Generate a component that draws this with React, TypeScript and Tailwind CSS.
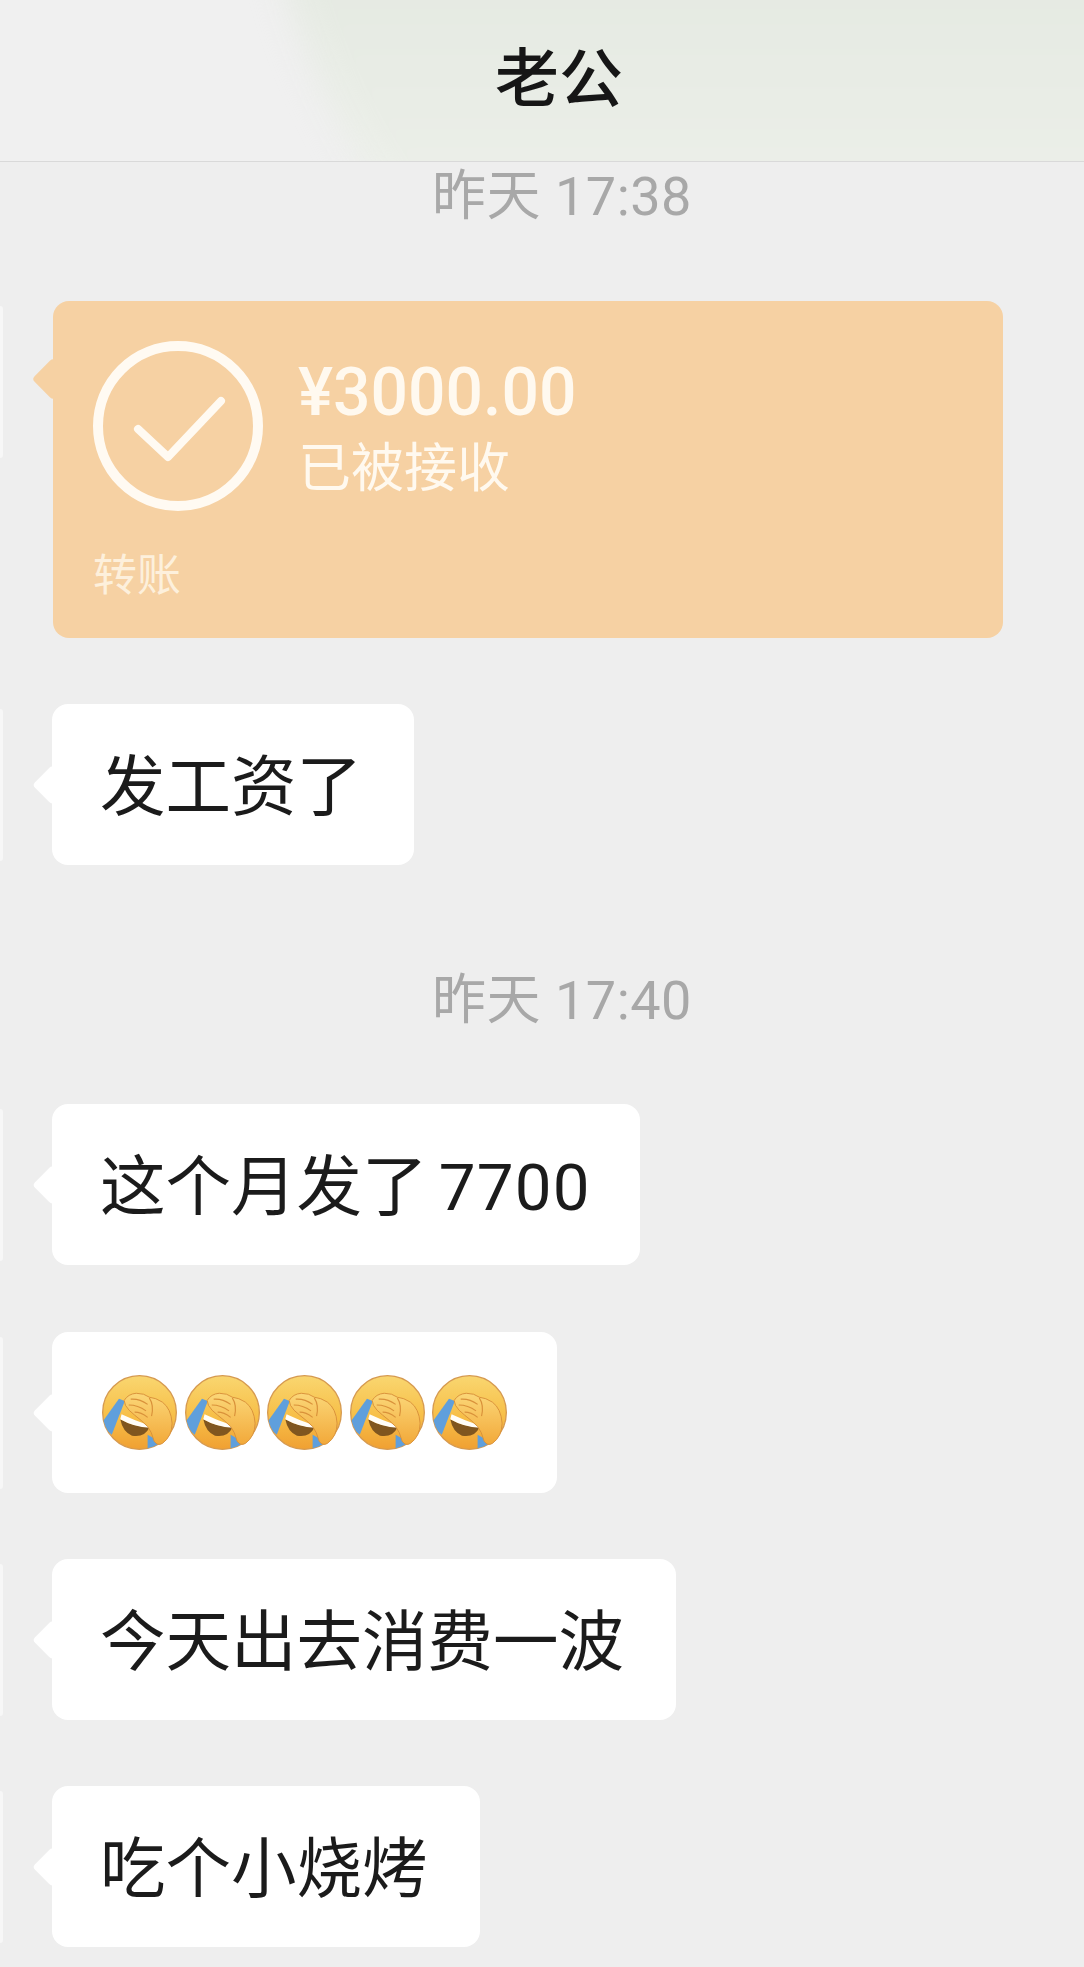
const cjk = "font-['Roboto','Noto_Sans_CJK_SC',sans-serif]";

function FacepalmEmoji() {
  return (
    <svg width="75" height="75" viewBox="20 12 230 230" className="shrink-0 blur-[0.6px]">
      <defs>
        <linearGradient id="face" x1="0" y1="0" x2="0" y2="1">
          <stop offset="0" stopColor="#f9d670" />
          <stop offset="0.55" stopColor="#f7bf48" />
          <stop offset="1" stopColor="#f0a032" />
        </linearGradient>
        <linearGradient id="hand" x1="0" y1="0" x2="0" y2="1">
          <stop offset="0" stopColor="#fbd778" />
          <stop offset="1" stopColor="#f2a93a" />
        </linearGradient>
        <clipPath id="faceClip">
          <circle cx="135" cy="127" r="113" />
        </clipPath>
      </defs>
      <circle cx="135" cy="127" r="113" fill="url(#face)" stroke="#d69a50" strokeWidth="4" />
      <g clipPath="url(#faceClip)">
        <path d="M72 85 L90 92 L50 195 L15 165 Z" fill="#5f9fdc" />
        <path d="M160 195 L195 215 L185 245 L160 245 Z" fill="#5f9fdc" />
        <path d="M76 148 Q118 172 166 172 Q150 205 112 198 Q84 188 76 148 Z" fill="#80561f" />
        <path d="M80 132 Q118 150 158 164 L166 174 Q118 172 76 148 Z" fill="#fffdf8" />
      </g>
      <path
        d="M88 90 Q100 70 125 68 Q150 68 165 80 Q185 82 205 95 Q232 115 235 160 Q235 200 205 222 Q190 230 180 215 Q172 185 160 170 Q140 150 120 135 Q100 120 92 105 Z"
        fill="url(#hand)"
        stroke="#d9913a"
        strokeWidth="3"
      />
      <path
        d="M108 86 Q135 84 160 102 M102 104 Q130 104 155 122 M120 126 Q140 126 160 142 M165 82 Q180 105 172 138"
        stroke="#d9913a"
        strokeWidth="3.5"
        fill="none"
      />
    </svg>
  );
}

function Tail({ className }: { className: string }) {
  return <div className={`absolute left-0 -translate-x-1/2 -translate-y-1/2 rotate-45 rounded-[4px] ${className}`} />;
}

function Row({ children, className }: { children: React.ReactNode; className?: string }) {
  return (
    <div className={`flex items-start ${className ?? ''}`}>
      <div className="w-[3px] h-[152px] mt-[5px] rounded-r-[8px] bg-[#f7f7f7]" />
      <div className="ml-[49px]">{children}</div>
    </div>
  );
}

function TextBubble({ children }: { children: React.ReactNode }) {
  return (
    <div className="relative inline-flex items-center h-[161px] pl-[48px] pr-[52px] rounded-[16px] bg-white text-[65.5px] leading-none text-[#1b1b1b]">
      <Tail className="top-1/2 w-[28px] h-[28px] bg-white" />
      <span className="relative top-[3px] whitespace-pre">{children}</span>
    </div>
  );
}

function TimeLabel({ children, className }: { children: React.ReactNode; className?: string }) {
  return <div className={`text-center text-[54px] leading-none tracking-[0.5px] text-[#a8a8a8] ${className ?? ''}`}>{children}</div>;
}

export default function App() {
  return (
    <div className={`relative h-[1967px] w-full overflow-hidden bg-[#eeeeee] ${cjk}`}>
      {/* Header */}
      <div className="relative h-[162px] overflow-hidden border-b border-[#d9d9d9] bg-[#f0f0f0]">
        <div className="absolute -top-[900px] left-[260px] h-[1400px] w-[1600px] rounded-full bg-linear-to-b from-[#e4e9e1] from-60% to-[#edf0ea] to-80% blur-[16px]" />
        <div className="relative flex h-full items-center justify-center pl-[34px] pb-[2px] text-[64px] font-medium leading-none text-[#161616]">
          老公
        </div>
      </div>

      <TimeLabel className="mt-[8px] pl-[40px]">昨天 17:38</TimeLabel>

      {/* Transfer */}
      <Row className="mt-[77px]">
        <div className="relative ml-[1px] flex h-[337px] w-[950px] flex-col rounded-[16px] bg-[#f6d1a3] pl-[40px] text-white">
          <Tail className="top-[78px] w-[30px] h-[30px] bg-[#f6d1a3]" />
          <div className="relative mt-[40px] flex items-start">
            <svg width="170" height="170" viewBox="0 0 170 170" fill="none" className="shrink-0">
              <circle cx="85" cy="85" r="80" stroke="#fffaf2" strokeWidth="10" />
              <path d="M45 88 L75 116 L128 60" stroke="#fffaf2" strokeWidth="8" strokeLinejoin="round" strokeLinecap="round" />
            </svg>
            <div className="ml-[35px] flex flex-col text-[#fff9ef]">
              <span className="mt-[19px] text-[66px] font-medium leading-none">¥3000.00</span>
              <span className="mt-[17px] text-[53px] leading-none">已被接收</span>
            </div>
          </div>
          <span className="mt-[43px] text-[44px] leading-none text-[#fdf0dc]">转账</span>
        </div>
      </Row>

      <Row className="mt-[66px]">
        <TextBubble>发工资了</TextBubble>
      </Row>

      <TimeLabel className="mt-[109px] pl-[40px]">昨天 17:40</TimeLabel>

      <Row className="mt-[76px]">
        <TextBubble>
          <span className="[word-spacing:-5px]">这个月发了 </span>
          <span className="-mr-[3px] tracking-[1.2px]">7700</span>
        </TextBubble>
      </Row>

      <Row className="mt-[67px]">
        <div className="relative inline-flex h-[161px] items-center gap-[7.5px] rounded-[16px] bg-white pl-[50px] pr-[50px]">
          <Tail className="top-1/2 w-[28px] h-[28px] bg-white" />
          <FacepalmEmoji />
          <FacepalmEmoji />
          <FacepalmEmoji />
          <FacepalmEmoji />
          <FacepalmEmoji />
        </div>
      </Row>

      <Row className="mt-[66px]">
        <TextBubble>今天出去消费一波</TextBubble>
      </Row>

      <Row className="mt-[66px]">
        <TextBubble>吃个小烧烤</TextBubble>
      </Row>
    </div>
  );
}
